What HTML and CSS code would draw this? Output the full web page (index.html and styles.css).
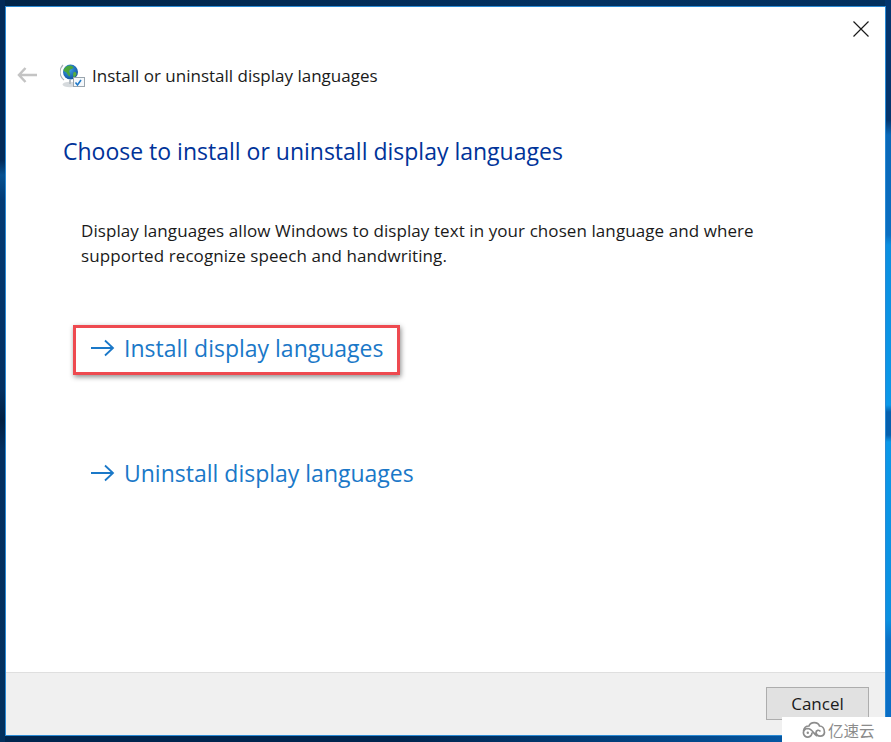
FILE: index.html
```html
<!DOCTYPE html>
<html lang="en">
<head>
<meta charset="utf-8">
<title>Install or uninstall display languages</title>
<link rel="stylesheet" href="styles.css">
</head>
<body>
<div class="window">
  <div class="titlebar">
    <svg class="close" width="16" height="16" viewBox="0 0 16 16"><path d="M0.500 0.500L15.500 15.500M15.500 0.500L0.500 15.500" stroke="#1a1a1a" stroke-width="1.200" fill="none"/></svg>
  </div>
  <div class="nav">
    <svg class="back" width="20" height="16" viewBox="0 0 20 16"><path d="M20 8H2M8.500 1L2 8L8.500 15" stroke="#c4c4c4" stroke-width="2.500" fill="none"/></svg>
    <svg class="globe" width="26" height="26" viewBox="0 0 26 26">
      <defs><radialGradient id="g" cx="0.4" cy="0.35" r="0.7"><stop offset="0" stop-color="#3fa4e8"/><stop offset="1" stop-color="#0d4f9c"/></radialGradient></defs>
      <path d="M3 2A10 10 0 0 0 4 17" stroke="#a9b1b8" stroke-width="1.200" fill="none"/>
      <ellipse cx="10" cy="21.500" rx="7.500" ry="2.800" fill="#d6dadd"/>
      <rect x="9" y="17" width="2" height="4" fill="#b5bcc2"/>
      <circle cx="10.500" cy="9" r="7.500" fill="url(#g)"/>
      <path d="M6.500 3.500c3-2 6-1 7 1c-1 2-3 1-4 3c-1 2 2 3 0 6c-2-1-2-3-3-4c-1-1-3-1-3-2c0-2 2-3 3-4z" fill="#4aa63c"/>
      <path d="M13.500 9.500c2-1 3 0 3 2c-1 2-2 3-3 3c0-2-1-3 0-5z" fill="#58ad3f"/>
      <rect x="13.500" y="14.500" width="11" height="9" fill="#f5f8fb" stroke="#9aa5ae"/>
      <path d="M15.500 19.500l2 2.500l3.500-5" stroke="#1f79c9" stroke-width="1.600" fill="none"/>
    </svg>
    <span class="nav-title">Install or uninstall display languages</span>
  </div>
  <main class="content">
    <h1 class="heading">Choose to install or uninstall display languages</h1>
    <p class="intro">Display languages allow Windows to display text in your chosen language and where supported recognize speech and handwriting.</p>
    <div class="links">
      <a class="cmd cmd-marked">
        <svg class="arrow" width="24" height="18" viewBox="0 0 24 18"><path d="M0 9H22M14 1.500L22 9L14 16.500" stroke="#1a78c8" stroke-width="1.800" fill="none"/></svg>
        <span>Install display languages</span>
      </a>
      <a class="cmd">
        <svg class="arrow" width="24" height="18" viewBox="0 0 24 18"><path d="M0 9H22M14 1.500L22 9L14 16.500" stroke="#1a78c8" stroke-width="1.800" fill="none"/></svg>
        <span>Uninstall display languages</span>
      </a>
    </div>
  </main>
  <footer class="footer">
    <button class="btn">Cancel</button>
  </footer>
</div>
<div class="watermark">
  <svg width="26" height="17" viewBox="0 0 26 17"><path d="M2.500 10C3 6.500 5.500 5 8 5C9.500 0.500 17 0.500 18.500 5C21 5 23.500 7 23.500 11.500A4.300 4.300 0 0 1 15 11.500C15 9 18 8.500 19.500 10.500M11 11.500A4.300 4.300 0 1 1 6.500 7.500C9 7.500 11 9.500 12.500 11.500C13.500 13 14.500 14 16 15" stroke="#8c8c8c" stroke-width="1.700" fill="none"/><circle cx="6.800" cy="11.800" r="1.200" fill="#8c8c8c"/></svg>
  <span>亿速云</span>
</div>
</body>
</html>
```
FILE: styles.css
```css
html, body {
  margin: 0;
  height: 100%;
}
body {
  box-sizing: border-box;
  padding: 6px 5px 6px 5px;
  background-color: #00264f;
  background-image:
    linear-gradient(180deg, #03356e 0, #03356e 120px, #0a68b8 135px, #0a6fc2 235px, #0b8fe0 245px, #0b98e8 405px, #0560ae 412px, #0560ae 435px, #0b98e8 442px, #0b90e0 620px, #0a72c8 640px, #0a6cc4 742px),
    linear-gradient(180deg, #022a58 0, #022a58 160px, #06508f 175px, #033a74 200px, #032f60 390px, #011f42 420px, #032f60 450px, #02305e 742px),
    linear-gradient(90deg, #012448 0, #033262 65%, #02305e 100%),
    linear-gradient(90deg, #00264f 0, #00264f 45%, #024a8e 80%, #0a6cc4 100%);
  background-size: 6px 100%, 5px 100%, 100% 6px, 100% 7px;
  background-position: right top, left top, left top, left bottom;
  background-repeat: no-repeat;
  font-family: "Open Sans", "Noto Sans", sans-serif;
  overflow: hidden;
}
.window {
  box-sizing: border-box;
  height: 730px;
  border: 1px solid #2a8ad4;
  background: #fff;
  display: flex;
  flex-direction: column;
}
.titlebar {
  display: flex;
  justify-content: flex-end;
  padding: 14px 16px 0 0;
  height: 29px;
}
.nav {
  display: flex;
  align-items: center;
  height: 50px;
  padding-left: 11px;
}
.back { margin-right: 23px; }
.globe { margin-right: 6px; margin-top: 1px; }
.nav-title {
  font-size: 17px;
  color: #1a1a1a;
}
.content {
  flex: 1;
  padding-left: 57px;
}
.heading {
  margin: 35px 0 0;
  font-size: 23px;
  font-weight: 400;
  line-height: 32px;
  color: #003399;
}
.intro {
  margin: 51px 0 0 18px;
  width: 690px;
  font-size: 17px;
  line-height: 25px;
  color: #1a1a1a;
  letter-spacing: 0.08px;
}
.links {
  margin: 57px 0 0 10px;
  display: flex;
  flex-direction: column;
  gap: 75px;
}
.cmd {
  box-sizing: border-box;
  width: 360px;
  height: 50px;
  padding: 0 0 4px 15px;
  border: 3px solid transparent;
  display: flex;
  align-items: center;
  gap: 9px;
  color: #1a78c8;
  font-size: 23px;
  white-space: nowrap;
}
.cmd-marked {
  width: 327px;
  border-color: #ee4a50;
  box-shadow: 1px 2px 5px rgba(0, 0, 0, 0.45);
}
.footer {
  box-sizing: border-box;
  height: 63px;
  background: #f0f0f0;
  border-top: 1px solid #dfdfdf;
  display: flex;
  justify-content: flex-end;
  align-items: flex-start;
  padding: 14px 16px 0 0;
}
.btn {
  width: 103px;
  height: 33px;
  background: #e1e1e1;
  border: 1px solid #adadad;
  font: 17px "Open Sans", "Noto Sans", sans-serif;
  color: #1a1a1a;
  padding: 0;
}
.watermark {
  position: absolute;
  left: 782px;
  top: 717px;
  width: 109px;
  height: 25px;
  background: #fff;
  display: flex;
  align-items: center;
  gap: 1px;
  padding-left: 19px;
  box-sizing: border-box;
  color: #8c8c8c;
  font: 15.500px "Noto Sans CJK SC", sans-serif;
}
```
